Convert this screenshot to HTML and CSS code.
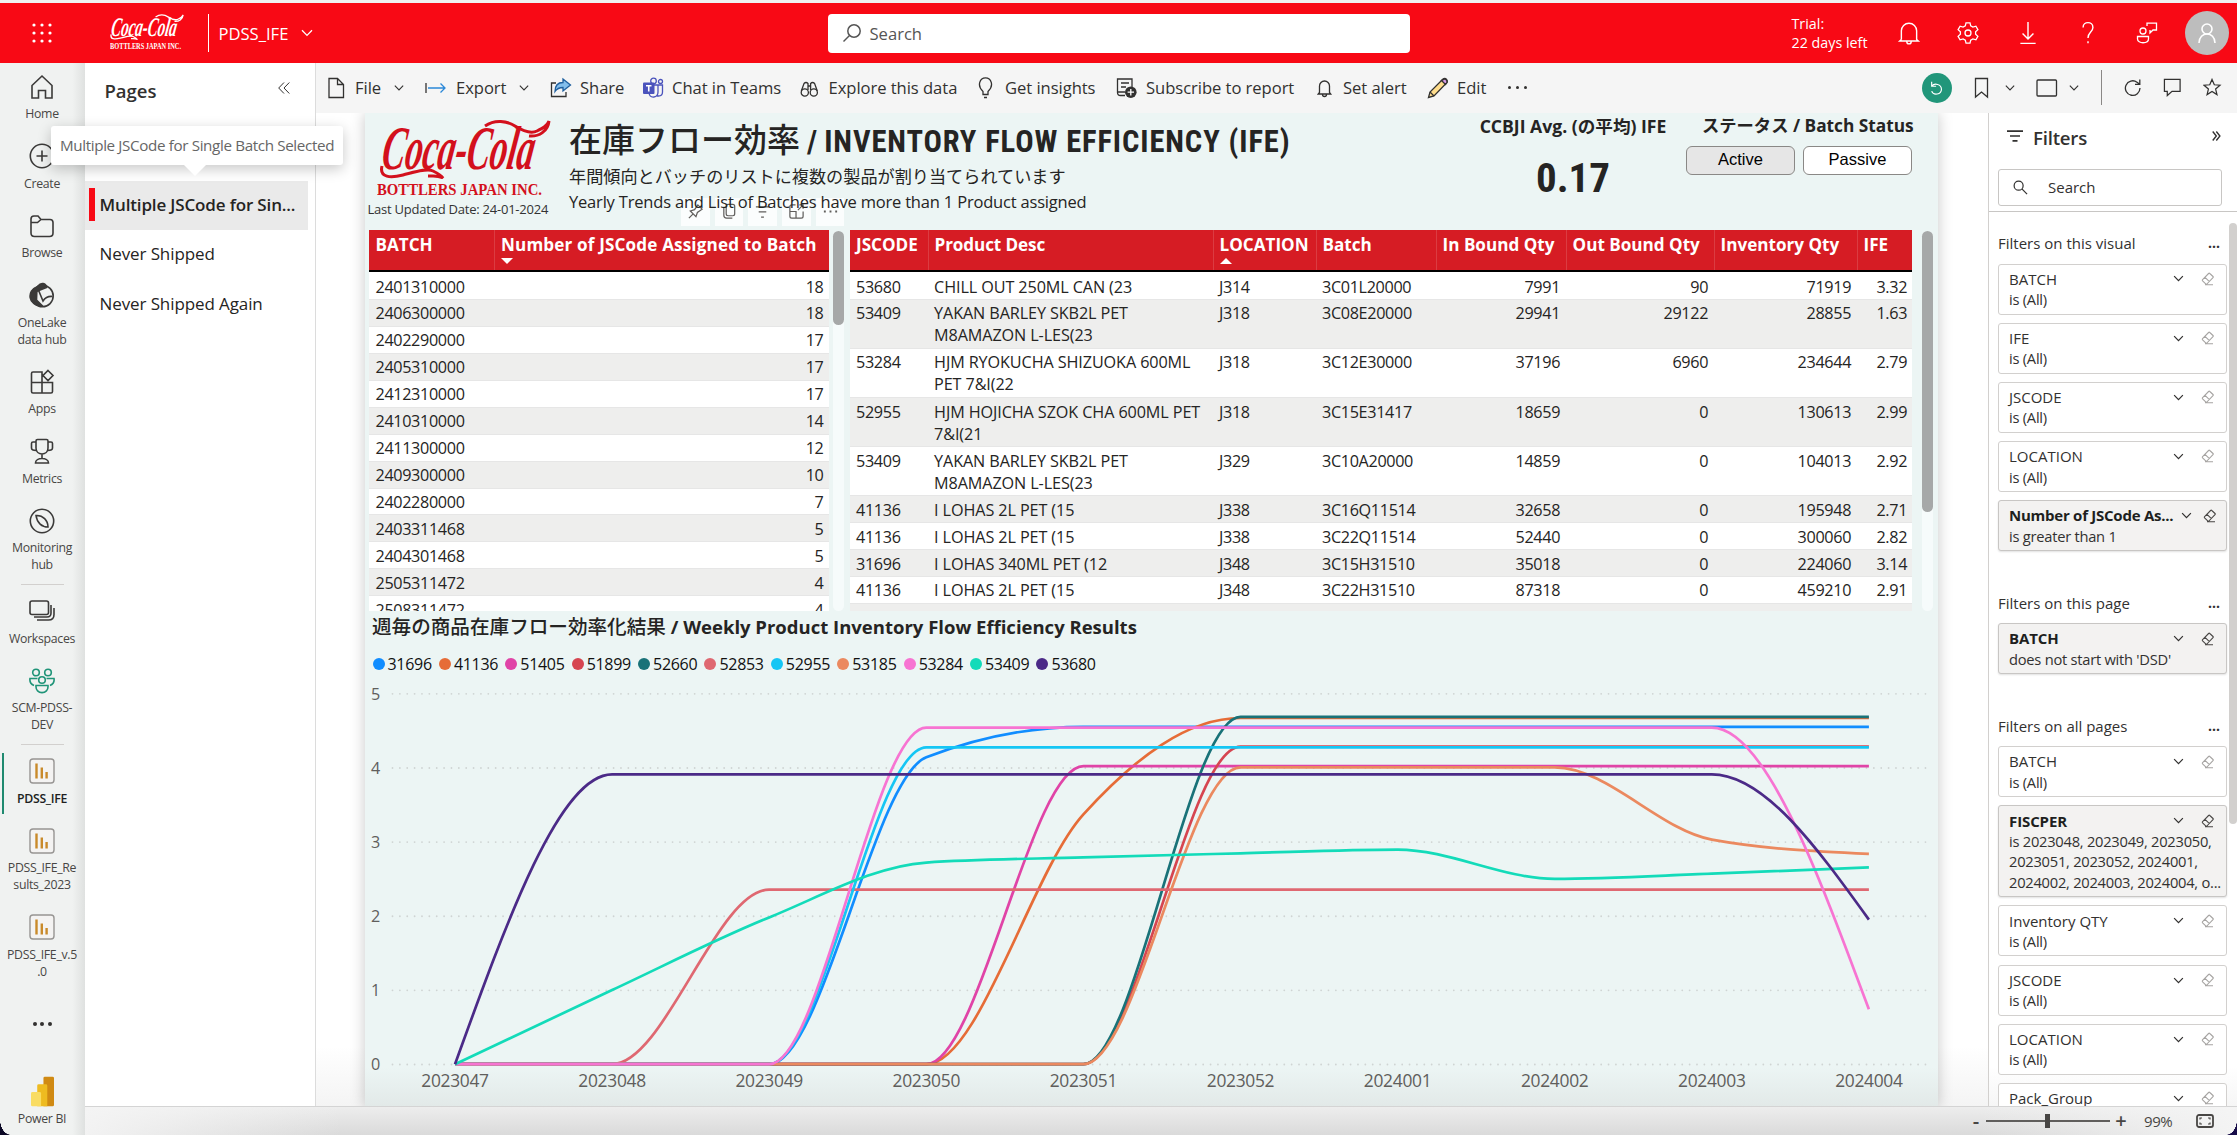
FILE: index.html
```html
<!DOCTYPE html>
<html lang="en">
<head>
<meta charset="utf-8">
<title>PDSS_IFE - Power BI</title>
<link rel="stylesheet" href="styles.css">
</head>
<body>
<svg class="defs" width="0" height="0">
  <defs>
    <symbol id="chev" viewBox="0 0 12 8"><path d="M1 1.2 6 6.4 11 1.2"/></symbol>
    <symbol id="eraser" viewBox="0 0 14 14"><path d="M5.2 12.3 1.6 8.9q-.6-.6 0-1.2L7.6 1.5q.6-.6 1.2 0l3.2 3q.6.6 0 1.2L5.6 12.3zM4 5.4l4.4 4.2M4 12.8h8"/></symbol>
    <symbol id="report" viewBox="0 0 26 26"><rect x="1" y="1" width="24" height="24" rx="3" fill="#f4f3f2" stroke="#979593" stroke-width="1.4"/><path d="M7.5 5.5v15M12.8 9.5v11M17.6 14v6.5" stroke="#c98a2b" stroke-width="2.4" fill="none"/></symbol>
    <symbol id="coke" viewBox="0 0 174 60">
      <text class="coke-text" x="11" y="50" textLength="152" lengthAdjust="spacingAndGlyphs" transform="skewX(-9)">Coca-Cola</text>
      <path d="M5 47c-3 12 9 12 21 9s24-7 30-4 8 4 10 7c-5-3-9-2-15-2" fill="none" stroke="currentColor" stroke-width="3"/>
      <path d="M108 7c10-7 22-5 30 0s16 8 22 5 10-5 12-10c-1 10-10 16-20 15" fill="none" stroke="currentColor" stroke-width="3"/>
    </symbol>
  </defs>
</svg>

<header class="topbar">
  <svg class="waffle" viewBox="0 0 20 20"><g><circle cx="2" cy="2" r="1.6"/><circle cx="10" cy="2" r="1.6"/><circle cx="18" cy="2" r="1.6"/><circle cx="2" cy="10" r="1.6"/><circle cx="10" cy="10" r="1.6"/><circle cx="18" cy="10" r="1.6"/><circle cx="2" cy="18" r="1.6"/><circle cx="10" cy="18" r="1.6"/><circle cx="18" cy="18" r="1.6"/></g></svg>
  <div class="brand"><svg class="brand-mark"><use href="#coke"/></svg><svg class="brand-sub" viewBox="0 0 72 8"><text x="0" y="7" textLength="71" lengthAdjust="spacingAndGlyphs">BOTTLERS JAPAN INC.</text></svg></div>
  <div class="crumb"><span>PDSS_IFE</span><svg class="chev"><use href="#chev"/></svg></div>
  <div class="global-search"><svg viewBox="0 0 20 20"><circle cx="12" cy="8" r="6.2"/><path d="M7.5 12.5 1.5 18.5"/></svg><span>Search</span></div>
  <div class="trial">Trial:<br>22 days left</div>
  <nav class="top-icons">
    <svg viewBox="0 0 20 22"><path d="M3 17V9a7 7 0 0 1 14 0v8l1.5 1.3h-17L3 17M8 19a2 2 0 0 0 4 0"/></svg>
    <svg viewBox="0 0 24 24"><circle cx="12" cy="12" r="3"/><path d="M10 1.8h4l.7 3 2.2 1.3 3-.9 2 3.5-2.3 2.1v2.4l2.3 2.1-2 3.5-3-.9-2.2 1.3-.7 3h-4l-.7-3-2.2-1.3-3 .9-2-3.5 2.3-2.1v-2.4L2.100 8.700l2-3.500 3 .9 2.200-1.300z"/></svg>
    <svg viewBox="0 0 20 22"><path d="M10 1v15M5 11.500l5 5 5-5M3 20.500h14"/></svg>
    <svg viewBox="0 0 20 22"><path d="M5.500 6c0-6 9-6 9 0 0 4-4.500 4.500-4.500 9.500M10 18.500v2"/></svg>
    <svg viewBox="0 0 24 24"><circle cx="8" cy="10" r="3"/><path d="M2.500 15.500h11v2.500c0 5-11 5-11 0zM12 5V2.200h9.500V9H18l-3 3V9"/></svg>
  </nav>
  <div class="avatar"><svg viewBox="0 0 24 24"><circle cx="12" cy="8" r="5"/><path d="M4 22c0-12 16-12 16 0"/></svg></div>
</header>

<div class="shell">
  <nav class="rail">
    <a class="rail-item"><svg viewBox="0 0 26 26"><path d="M3 11.500 13 2l10 9.500V24h-6.500v-7.500h-7V24H3z"/></svg><span>Home</span></a>
    <a class="rail-item"><svg viewBox="0 0 26 26"><circle cx="13" cy="13" r="11.700"/><path d="M13 7.500v11M7.500 13h11"/></svg><span>Create</span></a>
    <a class="rail-item"><svg viewBox="0 0 26 26"><path d="M2 6q0-3 3-3h4l3 3.500h9q3 0 3 3V20q0 3.500-3.500 3.500h-15Q2 23.500 2 20zM2.500 9.500h6L12 6.500"/></svg><span>Browse</span></a>
    <a class="rail-item"><svg viewBox="0 0 26 26"><circle cx="13.500" cy="14" r="10.700"/><path d="M8 5 7.500 18l6 6C-2 24-2 8 8 5z" fill="#3b3a39"/><path d="M9 4c3-4 8-3 8.500 1.500L8.500 9z" fill="#3b3a39"/><path d="M9 7l5 12c2-3 5-5 9.500-4.500"/></svg><span>OneLake<br>data hub</span></a>
    <a class="rail-item"><svg viewBox="0 0 26 26"><path d="M2.500 4.500q0-1.500 1.500-1.500h9v21H4q-1.500 0-1.500-1.500zM2.500 13.500h21v9q0 1.500-1.500 1.500h-9M19 1.500l5 5-5 5-5-5z"/></svg><span>Apps</span></a>
    <a class="rail-item"><svg viewBox="0 0 26 26"><path d="M7 3q0-1.500 1.500-1.500h9Q19 1.500 19 3v7c0 8-12 8-12 0zM7 4H4Q2.500 4 2.500 5.500V10q0 2.500 4.800 2.500M19 4h3q1.500 0 1.500 1.500V10q0 2.500-4.800 2.500M13 16v4.500M6.500 25c0-6 13-6 13 0z"/></svg><span>Metrics</span></a>
    <a class="rail-item"><svg viewBox="0 0 26 26"><circle cx="13" cy="13" r="11.700"/><path d="M7 7.500c7-.5 12 5 12 11.500-6 0-11-4-12-11.500z"/></svg><span>Monitoring<br>hub</span></a>
    <hr>
    <a class="rail-item"><svg viewBox="0 0 26 26"><rect x="1" y="3" width="18.500" height="13.500" rx="2"/><path d="M5 19h13q4 0 4-4V7M8 22h11.500q5.500 0 5.500-5.500V10"/></svg><span>Workspaces</span></a>
    <a class="rail-item team"><svg viewBox="0 0 26 26"><circle cx="7" cy="4.500" r="3.300"/><circle cx="19" cy="4.500" r="3.300"/><circle cx="13" cy="12" r="3.300"/><path d="M7 17.500h12c1 9.500-13 9.500-12 0zM8.500 10.500H1q-.8 5 4 7M17.500 10.500H25q.8 5-4 7"/></svg><span>SCM-PDSS-<br>DEV</span></a>
    <hr>
    <a class="rail-item current"><svg><use href="#report"/></svg><span>PDSS_IFE</span></a>
    <a class="rail-item"><svg><use href="#report"/></svg><span>PDSS_IFE_Re<br>sults_2023</span></a>
    <a class="rail-item"><svg><use href="#report"/></svg><span>PDSS_IFE_v.5<br>.0</span></a>
    <div class="rail-more"><i></i><i></i><i></i></div>
    <a class="rail-product"><svg viewBox="0 0 24 32"><path d="M13 2q0-1.500 1.500-1.500h8Q24 .5 24 2v28q0 1.500-1.500 1.500H13z" fill="#d08a13"/><path d="M6.500 10q0-1.500 1.500-1.500h7.500Q17 8.500 17 10v21.500H6.500z" fill="#eebb20"/><path d="M0 18q0-1.500 1.500-1.500h7.500q1.500 0 1.500 1.500v13.500h-9Q0 31.500 0 30z" fill="#f9dc63"/></svg><span>Power BI</span></a>
  </nav>

  <div class="main">
    <div class="work">
      <aside class="pages">
        <div class="pages-head"><h2>Pages</h2><svg viewBox="0 0 12 12"><path d="M6 .5.700 6 6 11.500M11.300.5 6 6l5.300 5.500"/></svg></div>
        <a class="page-link active">Multiple JSCode for Sin...</a>
        <a class="page-link">Never Shipped</a>
        <a class="page-link">Never Shipped Again</a>
        <div class="tooltip">Multiple JSCode for Single Batch Selected</div>
      </aside>

      <div class="stage">
        <div class="toolbar">
          <div class="tools">
            <a class="t-file"><svg viewBox="0 0 20 22"><path d="M2 1.500h8.500L16.500 7.500v13H2zM10.500 1.500v6h6"/></svg>File<svg class="chev"><use href="#chev"/></svg></a>
            <a class="t-export"><svg viewBox="0 0 22 22"><path d="M1 6v10"/><path d="M3 11h17M15.500 6.500 20 11l-4.500 4.500" stroke="#2b88d8"/></svg>Export<svg class="chev"><use href="#chev"/></svg></a>
            <a><svg viewBox="0 0 22 22"><path d="M6 6H1.500v13.500H16V15"/><path d="M13 2l7.500 6L13 14v-3.500c-4 0-6 1-8 4 0-6 3-9 8-9z" fill="#83beec" stroke="#1f5f9e"/></svg>Share</a>
            <a><svg viewBox="0 0 22 22"><circle cx="11.500" cy="4" r="2.800" stroke="#4b53bc"/><circle cx="18.500" cy="4.500" r="2" stroke="#4b53bc"/><path d="M12 8h8.500v7q0 4-4 4H15M7 16c1 6 9 5 9-1V8" stroke="#4b53bc"/><rect x="1" y="5.500" width="11.500" height="11.500" rx="1" fill="#4b53bc" stroke="none"/><path d="M4 8.700h5.500M6.750 8.700V14.500" stroke="#fff" stroke-width="1.600"/></svg>Chat in Teams</a>
            <a class="t-explore"><svg viewBox="0 0 22 22"><circle cx="4.800" cy="15.500" r="3.600"/><circle cx="13.800" cy="15.500" r="3.600"/><path d="M1.300 14 4 6.500q2-2 4 0V13M17.300 14 14.600 6.500q-2-2-4 0V13M8 9h2.600"/></svg>Explore this data</a>
            <a class="t-bulb"><svg viewBox="0 0 20 22"><path d="M5 14.500C-1.500 8.500 2 .8 7.500.8S16.500 8.500 10 14.500v3H5zM5 17.500h5M6 20.500h3"/></svg>Get insights</a>
            <a><svg viewBox="0 0 22 22"><path d="M9 18.500H4.500q-3 0-3-3V2H16v8M1.500 15H9M5 6h8M5 10h5"/><circle cx="14.800" cy="15.200" r="5.800" fill="#323130" stroke="none"/><path d="M14.800 12v6.400M11.600 15.200H18" stroke="#fff"/></svg>Subscribe to report</a>
            <a class="t-bell"><svg viewBox="0 0 20 22"><path d="M2.500 15.500V9a5 5 0 0 1 10 0v6.500l1.200 1.500H1.300zM5.500 17.500a2 2 0 0 0 4 0"/></svg>Set alert</a>
            <a><svg viewBox="0 0 22 22"><path d="M1.500 20.500 3 15 16 2q2-1.500 3.500.5T19.500 6L7 19z" fill="#ffdd8c"/><path d="M14.500 3.500 18.500 7.500 20 5.500Q20.500 3 18 1.800z" fill="#d89be8"/><path d="M3 15l4 4" /></svg>Edit</a>
            <span class="t-dots"><i></i><i></i><i></i></span>
          </div>
          <div class="tools-right">
            <span class="reset"><svg viewBox="0 0 18 18"><path d="M3 2v5h5M3 7c3-4 11-2.500 11 3.500 0 6-9 7.500-11 2"/></svg></span>
            <svg class="r-book" viewBox="0 0 16 22"><path d="M1.500 1.500h12v18.500l-6-5-6 5z"/></svg>
            <svg class="chev"><use href="#chev"/></svg>
            <svg class="r-rect" viewBox="0 0 22 18"><rect x="1" y="1" width="19.500" height="16" rx="1"/></svg>
            <svg class="chev r-c2"><use href="#chev"/></svg>
            <span class="vline"></span>
            <svg class="r-ref" viewBox="0 0 18 18"><path d="M16 9A7.300 7.300 0 1 1 13 3.200L15.500 5M15.800.5V5.300H11"/></svg>
            <svg class="r-com" viewBox="0 0 20 20"><path d="M1.500 1.500h16.500v12.500H9.500L4.500 18.500V14h-3z"/></svg>
            <svg class="r-star" viewBox="0 0 20 20"><path d="M9.500 1.500l2.400 5.600 6 .5-4.600 4 1.400 5.900-5.200-3.200-5.200 3.200 1.400-5.900-4.600-4 6-.5z"/></svg>
          </div>
        </div>

        <div class="below">
          <div class="canvas">
            <section class="report">
              <div class="head">
                <div class="logo-col">
                  <svg class="logo"><use href="#coke"/></svg>
                  <svg class="logo-sub" viewBox="0 0 166 16"><text x="0" y="13" textLength="165" lengthAdjust="spacingAndGlyphs">BOTTLERS JAPAN INC.</text></svg>
                  <div class="updated">Last Updated Date: 24-01-2024</div>
                </div>
                <div class="title-col">
                  <h1><span class="t-jp">在庫フロー効率</span> / <span class="t-en">INVENTORY FLOW EFFICIENCY (IFE)</span></h1>
                  <p class="sub-jp">年間傾向とバッチのリストに複数の製品が割り当てられています</p>
                  <p class="sub-en">Yearly Trends and List of Batches have more than 1 Product assigned</p>
                  <div class="hover-tools">
                    <span><svg viewBox="0 0 18 18"><path d="M2 16l4.500-4.500M3.500 8.500l6 6 1.500-4.500 5-3.500-4.500-4.500L8 7z"/></svg></span>
                    <span><svg viewBox="0 0 18 18"><rect x="5.500" y="1.500" width="9" height="12" rx="2"/><path d="M3 4v9q0 3 3 3h6"/></svg></span>
                    <span><svg viewBox="0 0 18 18"><path d="M2 4h14M5 9.500h8M7.500 15h3"/></svg></span>
                    <span><svg viewBox="0 0 18 18"><path d="M8 2H4Q2 2 2 4v10q0 2 2 2h10q2 0 2-2V9M2 9h6.500v7M10.500 7.500 16 2M12 2h4v4"/></svg></span>
                    <span><svg viewBox="0 0 18 18"><path d="M3 8v2M9 8v2M15 8v2" stroke-width="2"/></svg></span>
                  </div>
                </div>
                <div class="kpi"><div class="kpi-name">CCBJI Avg. (の平均) IFE</div><div class="kpi-value">0.17</div></div>
                <div class="status"><div class="status-name">ステータス / Batch Status</div><div class="buttons"><button class="on">Active</button><button>Passive</button></div></div>
              </div>

              <div class="tables">
                <div class="tbl batches">
                  <div class="tr th"><span>BATCH</span><span>Number of JSCode Assigned to Batch<i class="down"></i></span></div>
                  <div class="tr"><span>2401310000</span><b>18</b></div>
                  <div class="tr"><span>2406300000</span><b>18</b></div>
                  <div class="tr"><span>2402290000</span><b>17</b></div>
                  <div class="tr"><span>2405310000</span><b>17</b></div>
                  <div class="tr"><span>2412310000</span><b>17</b></div>
                  <div class="tr"><span>2410310000</span><b>14</b></div>
                  <div class="tr"><span>2411300000</span><b>12</b></div>
                  <div class="tr"><span>2409300000</span><b>10</b></div>
                  <div class="tr"><span>2402280000</span><b>7</b></div>
                  <div class="tr"><span>2403311468</span><b>5</b></div>
                  <div class="tr"><span>2404301468</span><b>5</b></div>
                  <div class="tr"><span>2505311472</span><b>4</b></div>
                  <div class="tr"><span>2508311472</span><b>4</b></div>
                </div>
                <div class="scroll s1"><i></i></div>
                <div class="tbl detail">
                  <div class="tr th"><span>JSCODE</span><span>Product Desc</span><span>LOCATION<i class="up"></i></span><span>Batch</span><span>In Bound Qty</span><span>Out Bound Qty</span><span>Inventory Qty</span><span>IFE</span></div>
                  <div class="tr"><span>53680</span><span>CHILL OUT 250ML CAN (23</span><span>J314</span><span>3C01L20000</span><b>7991</b><b>90</b><b>71919</b><b>3.32</b></div>
                  <div class="tr tall"><span>53409</span><span>YAKAN BARLEY SKB2L PET<br>M8AMAZON L-LES(23</span><span>J318</span><span>3C08E20000</span><b>29941</b><b>29122</b><b>28855</b><b>1.63</b></div>
                  <div class="tr tall"><span>53284</span><span>HJM RYOKUCHA SHIZUOKA 600ML<br>PET 7&amp;I(22</span><span>J318</span><span>3C12E30000</span><b>37196</b><b>6960</b><b>234644</b><b>2.79</b></div>
                  <div class="tr tall"><span>52955</span><span>HJM HOJICHA SZOK CHA 600ML PET<br>7&amp;I(21</span><span>J318</span><span>3C15E31417</span><b>18659</b><b>0</b><b>130613</b><b>2.99</b></div>
                  <div class="tr tall"><span>53409</span><span>YAKAN BARLEY SKB2L PET<br>M8AMAZON L-LES(23</span><span>J329</span><span>3C10A20000</span><b>14859</b><b>0</b><b>104013</b><b>2.92</b></div>
                  <div class="tr"><span>41136</span><span>I LOHAS 2L PET (15</span><span>J338</span><span>3C16Q11514</span><b>32658</b><b>0</b><b>195948</b><b>2.71</b></div>
                  <div class="tr"><span>41136</span><span>I LOHAS 2L PET (15</span><span>J338</span><span>3C22Q11514</span><b>52440</b><b>0</b><b>300060</b><b>2.82</b></div>
                  <div class="tr"><span>31696</span><span>I LOHAS 340ML PET (12</span><span>J348</span><span>3C15H31510</span><b>35018</b><b>0</b><b>224060</b><b>3.14</b></div>
                  <div class="tr"><span>41136</span><span>I LOHAS 2L PET (15</span><span>J348</span><span>3C22H31510</span><b>87318</b><b>0</b><b>459210</b><b>2.91</b></div>
                  <div class="tr"></div>
                </div>
                <div class="scroll s2"><i></i></div>
              </div>

              <h3 class="chart-title"><span>週毎の商品在庫フロー効率化結果</span> / Weekly Product Inventory Flow Efficiency Results</h3>
              <div class="legend" id="legend"></div>
              <svg class="chart" id="chart" viewBox="365 680 1573 426"></svg>
            </section>
          </div>

          <aside class="filters">
            <div class="f-head"><svg class="f-icon" viewBox="0 0 18 12"><path d="M1 1.200h16M4 6h10M6.500 10.800h5"/></svg><h2>Filters</h2><svg class="f-coll" viewBox="0 0 10 12"><path d="M.8 1 4.800 6l-4 5M4.800 1l4 5-4 5"/></svg></div>
            <div class="f-search"><svg viewBox="0 0 16 16"><circle cx="6" cy="6" r="4.800"/><path d="M9.500 9.500 15 15"/></svg><span>Search</span></div>
            <div class="f-list">
              <div class="f-title first"><span>Filters on this visual</span><b>...</b></div>
              <div class="card"><em>BATCH</em><svg class="chev"><use href="#chev"/></svg><svg class="er"><use href="#eraser"/></svg><p>is (All)</p></div>
              <div class="card"><em>IFE</em><svg class="chev"><use href="#chev"/></svg><svg class="er"><use href="#eraser"/></svg><p>is (All)</p></div>
              <div class="card"><em>JSCODE</em><svg class="chev"><use href="#chev"/></svg><svg class="er"><use href="#eraser"/></svg><p>is (All)</p></div>
              <div class="card"><em>LOCATION</em><svg class="chev"><use href="#chev"/></svg><svg class="er"><use href="#eraser"/></svg><p>is (All)</p></div>
              <div class="card set wide"><em>Number of JSCode As...</em><svg class="chev"><use href="#chev"/></svg><svg class="er"><use href="#eraser"/></svg><p>is greater than 1</p></div>
              <div class="f-title"><span>Filters on this page</span><b>...</b></div>
              <div class="card set"><em>BATCH</em><svg class="chev"><use href="#chev"/></svg><svg class="er"><use href="#eraser"/></svg><p>does not start with 'DSD'</p></div>
              <div class="f-title"><span>Filters on all pages</span><b>...</b></div>
              <div class="card"><em>BATCH</em><svg class="chev"><use href="#chev"/></svg><svg class="er"><use href="#eraser"/></svg><p>is (All)</p></div>
              <div class="card set"><em>FISCPER</em><svg class="chev"><use href="#chev"/></svg><svg class="er"><use href="#eraser"/></svg><p>is 2023048, 2023049, 2023050,<br>2023051, 2023052, 2024001,<br>2024002, 2024003, 2024004, o...</p></div>
              <div class="card"><em>Inventory QTY</em><svg class="chev"><use href="#chev"/></svg><svg class="er"><use href="#eraser"/></svg><p>is (All)</p></div>
              <div class="card"><em>JSCODE</em><svg class="chev"><use href="#chev"/></svg><svg class="er"><use href="#eraser"/></svg><p>is (All)</p></div>
              <div class="card"><em>LOCATION</em><svg class="chev"><use href="#chev"/></svg><svg class="er"><use href="#eraser"/></svg><p>is (All)</p></div>
              <div class="card"><em>Pack_Group</em><svg class="chev"><use href="#chev"/></svg><svg class="er"><use href="#eraser"/></svg></div>
            </div>
            <i class="f-thumb"></i>
          </aside>
        </div>
      </div>
    </div>

    <footer class="zoombar">
      <span class="z-minus">-</span><span class="z-track"><i></i></span><span class="z-plus">+</span><span class="z-pct">99%</span>
      <svg viewBox="0 0 18 14"><rect x="1" y="1" width="16" height="12" rx="2"/><path d="M4 5.500V4h2M12 4h2v1.500M14 8.500V10h-2M6 10H4V8.500" stroke-width="1.200"/></svg>
    </footer>
  </div>
</div>
<i class="corner bl"></i><i class="corner br"></i>
<script src="chart.js"></script>
</body>
</html>
```
FILE: styles.css
```css
* { box-sizing: border-box; margin: 0; padding: 0; }
body {
  width: 2237px; height: 1135px; overflow: hidden;
  display: flex; flex-direction: column; position: relative;
  font-family: "Open Sans", "Noto Sans CJK JP", sans-serif;
  font-size: 16.6px; color: #323130; background: #fff;
  white-space: nowrap;
}
svg { fill: none; stroke: currentColor; stroke-width: 1.3; display: block; flex: none; }
.defs { position: absolute; }
.chev { width: 12px; height: 8px; }
svg text { stroke: none; fill: currentColor; }
.coke-text { font: italic bold 62px "Liberation Serif", serif; }

/* top bar */
.topbar { height: 63px; flex: none; background: #f80915; border-top: 3px solid #f0f0f0; color: #fff; display: flex; align-items: center; padding-left: 32px; }
.waffle { width: 20px; height: 20px; fill: #fff; stroke: none; margin-right: 57px; }
.brand { width: 99.5px; border-right: 1px solid #fff; height: 38px; }
.brand-mark { width: 75px; height: 26px; }
.brand-sub { width: 72px; height: 8px; margin: 2px 0 0 1px; font: bold 7.5px "Liberation Serif", serif; }
.crumb { width: 619px; padding-left: 10px; display: flex; align-items: center; }
.crumb .chev { margin-left: 13px; }
.global-search { width: 582px; height: 39px; border-radius: 4px; background: #fff; color: #555; display: flex; align-items: center; padding-left: 14px; gap: 8px; }
.global-search svg { width: 20px; height: 20px; stroke-width: 1.5; }
.trial { width: 105px; margin-left: 382px; font-size: 14.3px; line-height: 19px; }
.top-icons { display: flex; }
.top-icons svg { width: 24px; height: 24px; margin-right: 35.7px; }
.avatar { width: 44px; height: 44px; border-radius: 50%; background: #bdbdbd; display: flex; align-items: center; justify-content: center; margin-left: -10px; }
.avatar svg { width: 24px; height: 24px; stroke-width: 1.6; }

/* rail */
.shell { flex: 1; display: flex; min-height: 0; }
.rail { width: 85px; flex: none; background: linear-gradient(90deg, #f0f2f1 85%, #dfe1e0); display: flex; flex-direction: column; font-size: 12.300px; letter-spacing: -.3px; line-height: 17px; text-align: center; color: #484644; padding-right: 1px; }
.rail-item { padding: 11px 0 10.200px; display: block; }
.rail-item svg { width: 26px; height: 26px; margin: 0 auto 5.300px; stroke-width: 1.600; color: #3b3a39; }
.rail-item.team svg { color: #1f9478; }
.rail-item span { display: block; }
.rail-item.current { font-weight: 600; color: #201f1e; background: linear-gradient(#1f8a70, #1f8a70) 2px 6px / 2px 61px no-repeat; }
.rail hr { border: 0; height: 1px; background: #d2d0ce; margin: 1px 20.500px 2px; flex: none; }
.rail-more { display: flex; gap: 3.500px; justify-content: center; margin-top: 32px; }
.rail-more i { width: 4px; height: 4px; border-radius: 50%; background: #323130; }
.rail-product { margin-top: 50px; }
.rail-product svg { width: 23px; height: 31px; stroke: none; margin: 0 auto 3px; }

/* pages */
.main { flex: 1; min-width: 0; display: flex; flex-direction: column; }
.work { flex: 1; display: flex; min-height: 0; }
.pages { width: 231px; flex: none; border-right: 1.500px solid #dcdcdc; position: relative; }
.pages-head { height: 117.500px; padding: 14px 25px 0 19.500px; display: flex; justify-content: space-between; }
.pages-head h2 { font-size: 18.500px; font-weight: 600; line-height: 27px; }
.pages-head svg { width: 12px; height: 12px; margin-top: 5px; stroke-width: 1; }
.page-link { display: block; height: 49.500px; line-height: 47px; padding-left: 14.500px; margin-right: 7px; color: #252423; font-size: 17px; letter-spacing: -.1px; }
.page-link.active { background: #eaeaea linear-gradient(#f80915, #f80915) 4px 7px / 6px 33px no-repeat; font-weight: 600; letter-spacing: -.15px; }
.tooltip { position: absolute; left: -34px; top: 63px; width: 292px; height: 39px; line-height: 39px; text-align: center; font-size: 15.200px; letter-spacing: -.36px; color: #666; background: #fff; border-radius: 3px; box-shadow: 0 4px 14px rgba(0,0,0,.22); z-index: 5; }
.tooltip::after { content: ""; position: absolute; left: 133px; bottom: -11px; border: 11px solid transparent; border-top-color: #fff; border-bottom: 0; }

/* toolbar */
.stage { flex: 1; display: flex; flex-direction: column; min-width: 0; }
.toolbar { height: 49.500px; flex: none; background: #f5f5f5; display: flex; justify-content: space-between; padding-left: 11px; align-items: center; }
.tools { display: grid; grid-template-columns: 98px 125px 92px 158px 178px 138px 201px 110px 81px 30px; letter-spacing: -.05px; }
.tools a { display: flex; align-items: center; }
.tools a > svg:first-child { width: 22px; height: 22px; margin-right: 8px; }
.tools a.t-export > svg:first-child { margin-right: 9px; }
.tools a.t-file > svg:first-child, .tools a.t-bulb > svg:first-child { width: 20px; }
.tools a.t-bulb > svg:first-child { margin-right: 7px; }
.tools a.t-bell > svg:first-child { width: 20px; margin-right: 6px; }
.tools a.t-explore > svg:first-child { margin-right: 6.500px; }
.tools .chev { width: 10px; margin-left: 12.500px; }
.t-dots { display: flex; gap: 5px; align-items: center; }
.t-dots i { width: 3px; height: 3px; border-radius: 50%; background: #323130; }
.tools-right { display: flex; align-items: center; width: 315px; }
.reset { width: 30px; height: 30px; border-radius: 50%; background: #21967a; color: #fff; display: flex; align-items: center; justify-content: center; margin-right: 22px; }
.reset svg { width: 16px; height: 16px; }
.r-book { width: 16px; height: 22px; margin-right: 15px; }
.tools-right .chev { width: 10px; }
.r-rect { width: 22px; height: 18px; margin: 0 11px 0 21px; }
.vline { width: 1px; height: 35px; background: #8a8886; margin: 0 22px; }
.r-ref { width: 18px; height: 18px; margin-right: 21px; }
.r-com { width: 19px; height: 19px; margin-right: 21px; }
.r-star { width: 19px; height: 19px; }

/* report */
.below { flex: 1; display: flex; min-height: 0; }
.canvas { flex: 1; padding-left: 49px; overflow: hidden; background: linear-gradient(#fff 94%, #f4f4f4); }
.report { width: 1573px; height: 994px; background: linear-gradient(#ecf5f4 96%, #e2e9e8); box-shadow: 0 0 14px rgba(0,0,0,.22); display: flex; flex-direction: column; color: #252423; }
.head { height: 117.500px; flex: none; display: flex; }
.logo-col { width: 204px; padding: 6px 0 0 2.500px; }
.logo { width: 174px; height: 60px; margin-left: 9.500px; color: #d3101c; }
.logo-sub { width: 166px; height: 16px; margin: 3px 0 0 9.500px; color: #d3101c; font: bold 16px "Liberation Serif", serif; }
.updated { font-size: 13px; letter-spacing: -.23px; line-height: 20px; margin-top: 1px; color: #333; }
.title-col { width: 896px; position: relative; }
.title-col h1 { font-size: 30.500px; line-height: 44px; height: 50px; padding-top: 6px; font-family: Roboto, "Noto Sans CJK JP", sans-serif; font-stretch: 75%; font-weight: 700; color: #252423; }
.t-en { letter-spacing: .9px; }
.t-jp { font-size: 33px; font-weight: 500; }
.sub-jp { font-size: 17.150px; line-height: 26px; margin-top: 1px; }
.sub-en { font-size: 16.500px; letter-spacing: -.19px; line-height: 23px; position: relative; z-index: 2; }
.hover-tools { position: absolute; left: 112px; top: 85px; display: flex; gap: 5px; color: #605e5c; }
.hover-tools span { width: 28.700px; height: 28px; background: #fbfdfd; display: flex; justify-content: center; align-items: center; }
.hover-tools svg { width: 17px; height: 17px; }
.kpi { width: 216px; text-align: center; }
.kpi-name, .status-name { font-weight: 700; font-size: 17.600px; line-height: 26px; }
.kpi-value { font: 700 41px/44px Roboto, sans-serif; font-stretch: 75%; margin-top: 17px; }
.status { padding-left: 5px; }
.status-name { padding-left: 16px; font-size: 17.300px; }
.buttons { display: flex; gap: 8px; margin-top: 7px; }
.buttons button { width: 109px; height: 29px; border: 1px solid #8a8886; border-radius: 6px; background: #fff; font: 16.500px "Liberation Sans", sans-serif; color: #000; padding-bottom: 2px; }
.buttons .on { background: #e6e6e6; }

.tables { display: flex; height: 381px; flex: none; padding-left: 4px; }
.tbl { overflow: hidden; font-size: 16.200px; letter-spacing: -.35px; background: #fff; }
.batches { width: 460px; }
.detail { width: 1063px; }
.detail span:nth-child(2) { letter-spacing: -.1px; }
.tr { display: grid; height: 26.950px; line-height: 22px; padding-top: 2.500px; border-top: 1px solid #e6e6e6; background: #fff; }
.tr:nth-child(odd) { background: #eeeeed; }
.tr:nth-child(2) { border-top: 0; padding-top: 3.500px; }
.tr.tall { height: 49.050px; }
.tr.th { height: 42px; background: #d61c24; color: #fff; font-weight: 700; font-size: 17.100px; letter-spacing: 0; border: 0; border-bottom: 2.500px solid #000; padding-top: 0; line-height: 30px; }
.tr span { padding-left: 6.500px; position: relative; }
.tr b { font-weight: 400; text-align: right; padding-right: 5.500px; }
.batches .tr { grid-template-columns: 125px 335px; }
.detail .tr { grid-template-columns: 78px 285px 103px 120px 130px 148px 143px 56px; }
.th span + span { border-left: 1px solid rgba(255,255,255,.14); padding-left: 6px; }
.batches .th span + span { letter-spacing: .15px; }
.th i { position: absolute; left: 6px; top: 28px; border: 6px solid transparent; }
.th .down { border-top-color: #fff; border-bottom: 0; }
.th .up { border-bottom-color: #fff; border-top: 0; }
.scroll { width: 11px; margin: 1px 5.500px 0 4.500px; border-radius: 6px; background: #f6fbfb; }
.scroll i { display: block; width: 11px; background: #a6a8a8; border-radius: 6px; }
.s1 i { height: 94px; }
.s2 { margin-left: 10px; }
.s2 i { height: 281px; }

.chart-title { font-size: 18.500px; font-weight: 700; line-height: 32px; padding-left: 7px; height: 37px; flex: none; }
.chart-title span { font-size: 19.600px; font-weight: 500; }
.legend { display: flex; padding-left: 7.500px; height: 32px; flex: none; font-size: 16px; letter-spacing: -.3px; line-height: 30px; color: #111; }
.legend span { width: 66.400px; display: flex; align-items: center; gap: 3px; }
.legend i { width: 12px; height: 12px; border-radius: 50%; }
.chart { width: 1573px; height: 426px; }
.grid-line { stroke: #cfd4d3; stroke-width: 1.800; stroke-dasharray: 0 7.370; stroke-linecap: round; }
.series { stroke-width: 2.700; stroke-linejoin: round; }
.tick { font-size: 16.200px; fill: #605e5c; text-anchor: middle; }
.tick.x { font-size: 17.400px; letter-spacing: -.3px; }

/* filters */
.filters { width: 249px; flex: none; border-left: 1.500px solid #d2d0ce; position: relative; display: flex; flex-direction: column; background: linear-gradient(#fff 96%, #f6f6f6); font-size: 15px; }
.f-head { display: flex; align-items: center; height: 49px; padding-left: 17px; flex: none; }
.f-icon { width: 18px; height: 12px; stroke-width: 1.700; margin-right: 9px; margin-bottom: 3px; }
.f-head h2 { font-size: 18.600px; font-weight: 600; width: 179px; letter-spacing: -.2px; }
.f-coll { width: 9px; height: 12px; margin-bottom: 3px; stroke-width: 1.500; }
.f-search { margin: 7px 0 0 9px; width: 224px; height: 37px; border: 1.500px solid #c8c6c4; border-radius: 3px; display: flex; align-items: center; gap: 20px; padding-left: 14px; flex: none; }
.f-search svg { width: 15px; height: 15px; }
.f-list { margin-top: 5px; border-top: 1.500px solid #c8c6c4; padding-left: 9px; overflow: hidden; flex: 1; }
.f-title { display: flex; justify-content: space-between; padding-right: 17px; margin-top: 32.500px; height: 39.500px; line-height: 38px; }
.f-title.first { margin-top: 12.500px; }
.f-title b { font-size: 14px; }
.card { width: 229px; border: 1.500px solid #d2d0ce; border-radius: 3px; padding: 4.200px 0 4px 10px; line-height: 20.400px; margin-bottom: 8.200px; display: grid; grid-template-columns: 164px 28px 1fr; align-items: center; background: #fff; }
.card em { font-style: normal; }
.card p { grid-column: 1 / -1; font-size: 14.700px; letter-spacing: -.25px; }
.card .chev { width: 11px; height: 7px; stroke-width: 1.400; }
.card .er { width: 14px; height: 14px; color: #a6a4a2; stroke-width: 1.100; }
.card.set { background: #f3f2f1; border-color: #c8c6c4; box-shadow: 0 1px 2px rgba(0,0,0,.12); }
.card.set em { font-weight: 700; color: #201f1e; letter-spacing: -.1px; }
.card.set .er { color: #484644; }
.card.wide { grid-template-columns: 172px 22px 1fr; }
.card.wide em { letter-spacing: -.25px; }
.f-thumb { position: absolute; right: 0; top: 110px; width: 8px; height: 601px; border-radius: 4px; background: #d2d0ce; }

/* zoom bar */
.zoombar { height: 29px; flex: none; border-top: 1px solid #d4d4d4; background: linear-gradient(90deg, rgba(245,245,245,.9), rgba(245,245,245,0) 12%, rgba(245,245,245,0) 88%, rgba(245,245,245,.95)), linear-gradient(#ededed, #dadada); display: flex; align-items: center; justify-content: flex-end; color: #484644; padding-right: 23px; }
.z-minus, .z-plus { width: 12px; text-align: center; font-size: 20px; line-height: 20px; font-weight: 600; }
.z-minus { margin-right: 3px; }
.z-track { width: 124px; height: 1.500px; background: #605e5c; margin: 0 5px 0 1px; position: relative; }
.z-track i { position: absolute; left: 59px; top: -6px; width: 5px; height: 14px; background: #484644; }
.z-pct { width: 81px; padding-left: 17px; margin-right: -12px; font-size: 15px; letter-spacing: -.4px; }
.zoombar svg { width: 18px; height: 14px; stroke-width: 1.800; margin-left: 0; }
.corner { position: absolute; bottom: 0; width: 11px; height: 15px; }
.bl { left: 0; background: radial-gradient(ellipse 11px 15px at 100% 0, transparent 97%, #0b0825 100%); }
.br { right: 0; background: radial-gradient(ellipse 11px 15px at 0 0, transparent 97%, #160c48 100%); }
```
FILE: chart.js
```js
const X0 = 455, STEP = 157.1, Y0 = 1064.2, UNIT = 74.13;
const weeks = ["2023047", "2023048", "2023049", "2023050", "2023051", "2023052", "2024001", "2024002", "2024003", "2024004"];
const series = [
  ["31696", "#118dff", [0, 0, 0, 4.14, 4.55, 4.55, 4.55, 4.55, 4.55, 4.55]],
  ["41136", "#e66c37", [0, 0, 0, 0, 3.37, 4.67, 4.67, 4.67, 4.67, 4.67]],
  ["51405", "#e044a7", [0, 0, 0, 0, 4.02, 4.02, 4.02, 4.02, 4.02, 4.02]],
  ["51899", "#d64550", [0, 0, 0, 0, 0, 4.285, 4.285, 4.285, 4.285, 4.285]],
  ["52660", "#197278", [0, 0, 0, 0, 0, 4.685, 4.685, 4.685, 4.685, 4.685]],
  ["52853", "#df6871", [0, 0, 2.355, 2.355, 2.355, 2.355, 2.355, 2.355, 2.355, 2.355]],
  ["52955", "#15c6f4", [0, 0, 0, 4.275, 4.275, 4.275, 4.275, 4.275, 4.275, 4.275]],
  ["53185", "#eb895f", [0, 0, 0, 0, 0, 4.005, 4.005, 4.005, 3.03, 2.837]],
  ["53284", "#f774d2", [0, 0, 0, 4.54, 4.54, 4.54, 4.54, 4.54, 4.54, 0.74]],
  ["53409", "#13dbb9", [0, 1, 1.98, 2.72, 2.79, 2.845, 2.895, 2.5, 2.57, 2.655]],
  ["53680", "#4b2a87", [0, 3.91, 3.91, 3.91, 3.91, 3.91, 3.91, 3.91, 3.91, 1.95]]
];
const px = i => X0 + i * STEP;
const py = v => Y0 - v * UNIT;

// Monotone cubic interpolation through evenly spaced points.
function curve(vals) {
  const y = vals.map(py), n = y.length, m = [];
  const d = y.slice(1).map((v, i) => (v - y[i]) / STEP);
  for (let i = 1; i < n - 1; i++) {
    m[i] = (Math.sign(d[i - 1]) + Math.sign(d[i])) *
      Math.min(Math.abs(d[i - 1]), Math.abs(d[i]), 0.25 * Math.abs(d[i - 1] + d[i])) || 0;
  }
  m[0] = (3 * d[0] - m[1]) / 2;
  m[n - 1] = (3 * d[n - 2] - m[n - 2]) / 2;
  let path = `M${px(0)} ${y[0]}`;
  for (let i = 0; i < n - 1; i++) {
    const h = STEP / 3;
    path += `C${px(i) + h} ${y[i] + h * m[i]} ${px(i + 1) - h} ${y[i + 1] - h * m[i + 1]} ${px(i + 1)} ${y[i + 1]}`;
  }
  return path;
}

let out = "";
for (let v = 0; v <= 5; v++) {
  out += `<line class="grid-line" x1="392.500" x2="1926" y1="${py(v) + 0.3}" y2="${py(v) + 0.3}"/>`;
  out += `<text class="tick" x="375.600" y="${py(v) + 6}">${v}</text>`;
}
weeks.forEach((w, i) => { out += `<text class="tick x" x="${px(i)}" y="1087">${w}</text>`; });
series.forEach(([, color, vals]) => { out += `<path class="series" stroke="${color}" d="${curve(vals)}"/>`; });
document.getElementById("chart").innerHTML = out;
document.getElementById("legend").innerHTML = series
  .map(([name, color]) => `<span><i style="background:${color}"></i>${name}</span>`).join("");
```
